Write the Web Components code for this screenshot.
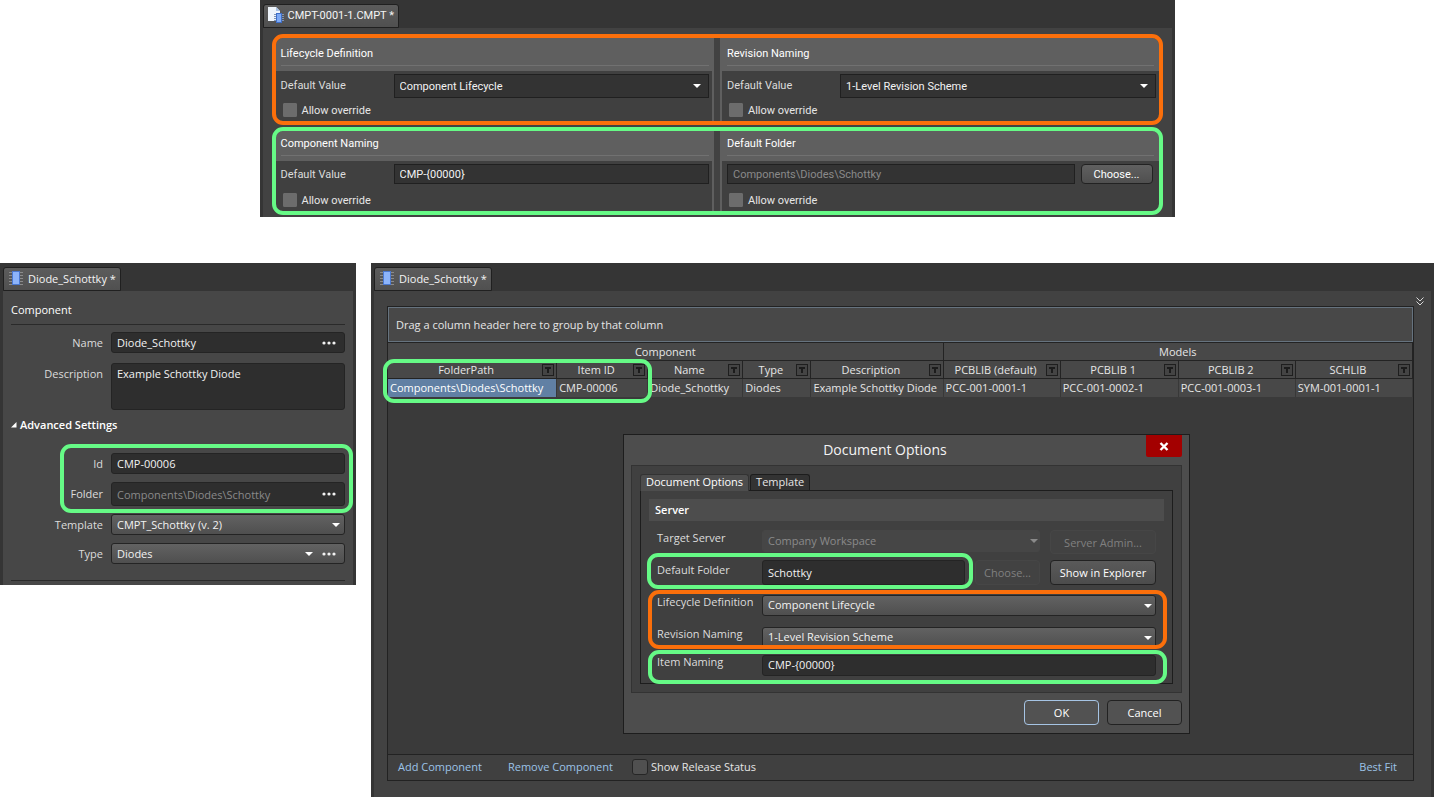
<!DOCTYPE html>
<html lang="en">
<head>
<meta charset="utf-8">
<title>Component templates</title>
<style>
    body {
        margin: 0;
        background: #fff;
        color: #e6e6e6;
        font: 11px/15px "Open Sans", "Noto Sans", sans-serif;
    }
</style>
</head>
<body>
<defaults-page></defaults-page>

<script>
const icons = {
    chip: `
        <svg width="16" height="16" viewBox="0 0 16 16">
            <path d="M1 2.5h14M1 5.5h14M1 8.5h14M1 11.5h14M1 14.5h14" stroke="#8b8b8b"/>
            <rect x="4" y="1" width="8" height="14" fill="#4a78d0"/>
            <rect x="5" y="2" width="6" height="12" fill="#8db4fa"/>
        </svg>`,
    document: `
        <svg width="16" height="16" viewBox="0 0 16 16">
            <path d="M0 0h8l4 4v10H0z" fill="#eef4fb"/>
            <path d="M8 0l4 4H8z" fill="#a9c2e4"/>
            <path d="M6 7.5h10M6 9.5h10M6 11.5h10M6 13.5h10" stroke="#7f93b5"/>
            <rect x="8" y="6" width="6" height="10" fill="#3f6fc8"/>
            <rect x="9" y="7" width="4" height="8" fill="#7eaaf5"/>
        </svg>`,
    arrow: `<svg class="arrow" width="8" height="4" viewBox="0 0 8 4"><path d="M0 0h8L4 4z" fill="currentColor"/></svg>`,
    dots: `<svg width="14" height="4" viewBox="0 0 14 4"><g fill="#f2f2f2"><circle cx="2" cy="2" r="1.600"/><circle cx="7" cy="2" r="1.600"/><circle cx="12" cy="2" r="1.600"/></g></svg>`,
    filter: `<svg width="12" height="12" viewBox="0 0 12 12"><rect x=".5" y=".5" width="11" height="11" fill="#444" stroke="#1e1e1e"/><path d="M3 3h6v2H7v4H5V5H3z" fill="#1c1c1c"/></svg>`,
    chevrons: `<svg width="8" height="9" viewBox="0 0 8 9"><path d="M.5 .5L4 4 7.500 .5M.5 4.500L4 8l3.500-3.500" fill="none" stroke="#d8d8d8"/></svg>`,
    close: `<svg width="10" height="9" viewBox="0 0 10 9"><path d="M1.500 1l7 7M8.500 1l-7 7" stroke="#fff" stroke-width="2.400"/></svg>`
}

/* Coloured outline drawn around whatever is slotted in */
const MarkRingTemplate = document.createElement("template")
MarkRingTemplate.innerHTML = `
    <style>
        :host {
            --ring-color: #66fa86;
            display: block;
            position: relative;
        }
        :host([tone="orange"]) {
            --ring-color: #fb6f0b;
        }
        :host::after {
            content: "";
            position: absolute;
            inset: var(--ring-inset, 0);
            border: 4px solid var(--ring-color);
            border-radius: 11px;
            pointer-events: none;
            z-index: 1;
        }
    </style>
    <slot></slot>
`

class MarkRing extends HTMLElement {
    constructor() {
        super()
        this.attachShadow({mode: "open"}).append(MarkRingTemplate.content.cloneNode(true))
    }
}

/* Editor window with one document tab */
class DocPanel extends HTMLElement {
    constructor() {
        super()
        this.attachShadow({mode: "open"})
    }

    connectedCallback() {
        this.shadowRoot.innerHTML = `
            <style>
                :host {
                    display: flex;
                    flex-direction: column;
                    box-sizing: border-box;
                    padding: 0 3px;
                    background: #353535;
                }
                .strip {
                    padding-top: 4px;
                    height: 24px;
                }
                button {
                    display: flex;
                    align-items: center;
                    gap: 4px;
                    box-sizing: border-box;
                    height: 24px;
                    padding: 0 4px 2px;
                    border: 1px solid #202020;
                    border-radius: 3px 3px 0 0;
                    background: linear-gradient(#5c5c5c, #505050);
                    color: #f4f4f4;
                    font: inherit;
                    white-space: nowrap;
                }
                .body {
                    flex: 1;
                    display: flex;
                    flex-direction: column;
                    background: var(--panel-body, #424242);
                }
            </style>
            <div class="strip">
                <button type="button" role="tab" aria-selected="true">${icons[this.getAttribute("icon")]}<span>${this.getAttribute("title-text")}</span></button>
            </div>
            <div class="body"><slot></slot></div>
        `
    }
}

/* Label with a text box, text area or drop-down */
class FormField extends HTMLElement {
    constructor() {
        super()
        this.attachShadow({mode: "open"})
    }

    connectedCallback() {
        const label = this.getAttribute("label")
        const kind = this.getAttribute("kind") || "text"
        this.shadowRoot.innerHTML = `
            <style>
                :host {
                    display: grid;
                    grid-template-columns: var(--label-width, 105px) minmax(0, 1fr);
                    align-items: start;
                }
                :host([bare]) {
                    display: block;
                }
                label {
                    line-height: var(--label-line, 21px);
                    text-align: var(--label-align, left);
                    padding-right: var(--label-gap, 0);
                    color: #dcdcdc;
                    white-space: nowrap;
                }
                .box {
                    display: grid;
                    align-items: center;
                    height: var(--control-height, 21px);
                }
                .box > * {
                    grid-area: 1 / 1;
                }
                input, textarea, select {
                    appearance: none;
                    box-sizing: border-box;
                    width: 100%;
                    height: 100%;
                    margin: 0;
                    padding: 0 5px var(--text-lift, 0);
                    border: 1px solid var(--control-border, #242424);
                    border-radius: var(--control-radius, 3px);
                    background: var(--input-fill, #2e2e2e);
                    color: #f2f2f2;
                    font: inherit;
                    resize: none;
                    opacity: 1;
                }
                textarea {
                    padding: 2px 5px;
                    overflow: hidden;
                }
                select {
                    background: var(--select-fill, linear-gradient(#626262, #4f4f4f));
                }
                :disabled {
                    color: #8a8a8a;
                }
                select:disabled {
                    background: #464646;
                    border-color: #464646;
                }
                .adorn {
                    justify-self: end;
                    display: flex;
                    align-items: center;
                    gap: 9px;
                    padding-right: var(--arrow-pad, 5px);
                    pointer-events: none;
                    color: #fff;
                }
                select:disabled + .adorn {
                    color: #8a8a8a;
                }
                .adorn.more {
                    padding-right: 9px;
                }
                .adorn button {
                    display: flex;
                    padding: 6px 0;
                    border: 0;
                    background: none;
                    pointer-events: auto;
                }
            </style>
            ${this.hasAttribute("bare") ? "" : `<label for="control">${label}</label>`}
            <div class="box">
                ${this.controlMarkup(kind, label)}
                ${this.adornMarkup(kind, label)}
            </div>
        `
    }

    controlMarkup(kind, label) {
        const value = this.getAttribute("value")
        const disabled = this.hasAttribute("disabled") ? "disabled" : ""
        switch(kind) {
            case "select":
                return `<select id="control" aria-label="${label}" ${disabled}><option>${value}</option></select>`
            case "area":
                return `<textarea id="control" aria-label="${label}" ${disabled}>${value}</textarea>`
            default:
                return `<input id="control" type="text" aria-label="${label}" value="${value}" ${disabled}>`
        }
    }

    adornMarkup(kind, label) {
        const more = this.hasAttribute("more")
        if(!more && kind !== "select") return ""
        return `
            <span class="adorn ${more ? "more" : ""}">
                ${kind === "select" ? icons.arrow : ""}
                ${more ? `<button type="button" aria-label="Browse ${label}">${icons.dots}</button>` : ""}
            </span>`
    }
}

const CheckFieldTemplate = document.createElement("template")
CheckFieldTemplate.innerHTML = `
    <style>
        :host {
            display: block;
        }
        label {
            display: flex;
            align-items: center;
            gap: var(--check-gap, 5px);
            height: var(--check-size, 14px);
            line-height: var(--check-line, 15px);
            white-space: nowrap;
        }
        input {
            appearance: none;
            box-sizing: border-box;
            flex: none;
            width: var(--check-size, 14px);
            height: var(--check-size, 14px);
            margin: 0;
            border: 1px solid var(--check-border, #6c6c6c);
            border-radius: var(--check-radius, 1px);
            background: var(--check-fill, #6c6c6c);
        }
        input:checked {
            background: #9cc3e8;
        }
    </style>
    <label><input type="checkbox"><slot></slot></label>
`

class CheckField extends HTMLElement {
    constructor() {
        super()
        this.attachShadow({mode: "open"}).append(CheckFieldTemplate.content.cloneNode(true))
    }
}

const PushButtonTemplate = document.createElement("template")
PushButtonTemplate.innerHTML = `
    <style>
        :host {
            display: block;
            height: 25px;
        }
        button {
            box-sizing: border-box;
            width: 100%;
            height: 100%;
            padding: 0;
            border: 1px solid #222;
            border-radius: 4px;
            background: var(--button-fill, #525252);
            color: #fff;
            font: inherit;
            white-space: nowrap;
        }
        :host([primary]) button {
            border-color: #a6c4e4;
        }
        button:disabled {
            border-color: #464646;
            background: #424242;
            color: #808080;
        }
    </style>
    <button type="button"><slot></slot></button>
`

class PushButton extends HTMLElement {
    constructor() {
        super()
        this.attachShadow({mode: "open"}).append(PushButtonTemplate.content.cloneNode(true))
    }

    connectedCallback() {
        this.shadowRoot.querySelector("button").disabled = this.hasAttribute("disabled")
    }
}

/* Titled block of the template editor */
class SettingSection extends HTMLElement {
    constructor() {
        super()
        this.attachShadow({mode: "open"})
    }

    connectedCallback() {
        this.shadowRoot.innerHTML = `
            <style>
                :host {
                    display: block;
                    background: #5f5f5f;
                }
                header {
                    padding: var(--section-top, 2px) 5px 5px;
                    color: #fff;
                }
                h2 {
                    margin: 0;
                    font: inherit;
                    line-height: 22px;
                    border-bottom: 1px solid #717171;
                }
                .body {
                    display: grid;
                    grid-template-rows: 24px 14px;
                    gap: 5px;
                    margin-right: 2px;
                    padding: 3px 3px 4px 5px;
                    background: #404040;
                }
                :host([side="right"]) header {
                    padding-left: 7px;
                }
                :host([side="right"]) .body {
                    margin: 0 0 0 2px;
                }
                ::slotted(check-field) {
                    padding-left: 2px;
                }
            </style>
            <header><h2>${this.getAttribute("heading")}</h2></header>
            <div class="body"><slot></slot></div>
        `
    }
}

const TemplateDefaultsTemplate = document.createElement("template")
TemplateDefaultsTemplate.innerHTML = `
    <style>
        :host {
            display: block;
            font-family: Roboto, "Open Sans", sans-serif;
            --label-width: 113px;
            --label-line: 24px;
            --control-height: 24px;
            --control-radius: 0;
            --input-fill: #333;
            --select-fill: #333;
            --control-border: #202020;
            --arrow-pad: 8px;
            --check-line: 17px;
            --button-fill: linear-gradient(#606060, #4f4f4f);
        }
        .stack {
            display: grid;
            gap: 2px;
            padding: 6px 9px 2px;
        }
        .pair {
            display: grid;
            grid-template-columns: 1fr 1fr;
            gap: 6px;
            margin: 4px;
            overflow: hidden;
            border-radius: 7px;
        }
        .first {
            --section-top: 5px;
        }
        .second {
            --label-line: 22px;
            --control-height: 20px;
        }
        .folder {
            display: grid;
            grid-template-columns: minmax(0, 1fr) 72px;
            gap: 6px;
            padding-right: 3px;
        }
        push-button {
            height: 20px;
        }
    </style>
    <doc-panel icon="document" title-text="CMPT-0001-1.CMPT *">
        <div class="stack">
            <mark-ring tone="orange">
                <div class="pair first">
                    <setting-section heading="Lifecycle Definition">
                        <form-field kind="select" label="Default Value" value="Component Lifecycle"></form-field>
                        <check-field>Allow override</check-field>
                    </setting-section>
                    <setting-section heading="Revision Naming" side="right">
                        <form-field kind="select" label="Default Value" value="1-Level Revision Scheme"></form-field>
                        <check-field>Allow override</check-field>
                    </setting-section>
                </div>
            </mark-ring>
            <mark-ring>
                <div class="pair second">
                    <setting-section heading="Component Naming">
                        <form-field label="Default Value" value="CMP-{00000}"></form-field>
                        <check-field>Allow override</check-field>
                    </setting-section>
                    <setting-section heading="Default Folder" side="right">
                        <div class="folder">
                            <form-field bare disabled label="Default Folder" value="Components\\Diodes\\Schottky"></form-field>
                            <push-button>Choose...</push-button>
                        </div>
                        <check-field>Allow override</check-field>
                    </setting-section>
                </div>
            </mark-ring>
        </div>
    </doc-panel>
`

class TemplateDefaults extends HTMLElement {
    constructor() {
        super()
        this.attachShadow({mode: "open"}).append(TemplateDefaultsTemplate.content.cloneNode(true))
    }
}

const ComponentPropertiesTemplate = document.createElement("template")
ComponentPropertiesTemplate.innerHTML = `
    <style>
        :host {
            display: block;
            --panel-body: #474747;
            --label-width: 100px;
            --label-align: right;
            --label-gap: 8px;
        }
        .content {
            padding: 4px 8px;
        }
        h2 {
            margin: 0;
            padding: 7px 0;
            font: inherit;
            color: #fff;
            border-bottom: 1px solid #2a2a2a;
        }
        .rows {
            display: grid;
            gap: 8px;
        }
        .basic {
            gap: 10px;
            padding: 7px 0;
        }
        .description {
            --control-height: 47px;
            --label-line: 22px;
        }
        .folder {
            --control-height: 24px;
            --label-line: 24px;
        }
        h3 {
            display: flex;
            align-items: center;
            gap: 3px;
            margin: 0 0 21px;
            font: inherit;
            font-weight: 600;
            color: #fff;
        }
        mark-ring {
            --ring-inset: -9px -8px -7px 49px;
        }
        hr {
            margin: 16px 0 0;
            border: 0;
            border-top: 1px solid #2a2a2a;
        }
    </style>
    <doc-panel icon="chip" title-text="Diode_Schottky *">
        <div class="content">
            <h2>Component</h2>
            <div class="rows basic">
                <form-field more label="Name" value="Diode_Schottky"></form-field>
                <form-field class="description" kind="area" label="Description" value="Example Schottky Diode"></form-field>
            </div>
            <h3><svg width="6" height="6" viewBox="0 0 6 6"><path d="M5.500 0v5.500H0z" fill="#fff"/></svg>Advanced Settings</h3>
            <div class="rows">
                <mark-ring>
                    <div class="rows">
                        <form-field label="Id" value="CMP-00006"></form-field>
                        <form-field class="folder" more disabled label="Folder" value="Components\\Diodes\\Schottky"></form-field>
                    </div>
                </mark-ring>
                <form-field kind="select" label="Template" value="CMPT_Schottky (v. 2)"></form-field>
                <form-field kind="select" more label="Type" value="Diodes"></form-field>
            </div>
            <hr>
        </div>
    </doc-panel>
`

class ComponentProperties extends HTMLElement {
    constructor() {
        super()
        this.attachShadow({mode: "open"}).append(ComponentPropertiesTemplate.content.cloneNode(true))
    }
}

const DocumentOptionsTemplate = document.createElement("template")
DocumentOptionsTemplate.innerHTML = `
    <style>
        :host {
            display: block;
            box-sizing: border-box;
            border: 1px solid #1d1d1d;
            background: #4d4d4d;
            --label-line: 13px;
            --arrow-pad: 4px;
            --text-lift: 2px;
        }
        .title {
            display: flex;
            align-items: start;
            height: 30px;
            padding-right: 7px;
        }
        h2 {
            flex: 1;
            margin: 0;
            font-size: 14px;
            font-weight: 400;
            line-height: 30px;
            text-align: center;
            color: #f4f4f4;
        }
        .close {
            display: flex;
            align-items: center;
            justify-content: center;
            width: 36px;
            height: 22px;
            padding: 0;
            border: 0;
            border-radius: 0 0 2px 2px;
            background: #a30000;
        }
        .frame {
            margin: 0 7px;
            padding: 8px;
            border: 1px solid #333;
            background: #404040;
        }
        .tabs {
            display: flex;
            gap: 1px;
            height: 16px;
        }
        .tabs button {
            box-sizing: border-box;
            height: 16px;
            padding: 0 5px 1px;
            border: 1px solid #1d1d1d;
            border-bottom: 0;
            border-radius: 3px 3px 0 0;
            background: #333;
            color: #e6e6e6;
            font: inherit;
            line-height: 14px;
        }
        .tabs button[aria-selected="true"] {
            height: 17px;
            padding-bottom: 2px;
            border-color: #333;
            background: #4d4d4d;
            color: #fff;
        }
        .page {
            padding: 8px 8px 7px;
            border: 1px solid #1d1d1d;
        }
        h3 {
            margin: 0 0 9px;
            padding: 0 6px;
            background: #4d4d4d;
            color: #fff;
            font: inherit;
            font-weight: 600;
            line-height: 22px;
        }
        .form {
            padding: 0 8px;
        }
        .line {
            display: grid;
            grid-template-columns: minmax(0, 1fr) 106px;
            gap: 10px;
        }
        .server {
            --arrow-pad: 2px;
            height: 30px;
        }
        .server push-button {
            height: 24px;
        }
        .server-field {
            --control-height: 22px;
            --label-line: 16px;
        }
        .target {
            grid-template-columns: minmax(0, 1fr) 65px 106px;
            margin-bottom: 10px;
        }
        .target .box {
            --control-height: 25px;
            --label-line: 20px;
            --text-lift: 0;
            --ring-inset: -7px -8px -4px -10px;
        }
        .pair {
            display: grid;
            gap: 11px;
            margin-bottom: 7px;
            --ring-inset: -5px -11px -1px -9px;
        }
        .item {
            --ring-inset: -5px -11px -8px -9px;
        }
        .push {
            --button-fill: linear-gradient(#5a5a5a, #4c4c4c);
        }
        .buttons {
            display: grid;
            grid-template-columns: 75px 75px;
            justify-content: end;
            gap: 8px;
            padding: 7px 7px 8px;
        }
    </style>
    <div class="title">
        <h2>Document Options</h2>
        <button class="close" type="button" aria-label="Close">${icons.close}</button>
    </div>
    <div class="frame">
        <div class="tabs" role="tablist">
            <button type="button" role="tab" aria-selected="true">Document Options</button>
            <button type="button" role="tab" aria-selected="false">Template</button>
        </div>
        <div class="page">
            <h3>Server</h3>
            <div class="form">
                <div class="line server">
                    <form-field class="server-field" kind="select" disabled label="Target Server" value="Company Workspace"></form-field>
                    <push-button disabled>Server Admin...</push-button>
                </div>
                <div class="line target">
                    <mark-ring class="box">
                        <form-field label="Default Folder" value="Schottky"></form-field>
                    </mark-ring>
                    <push-button disabled>Choose...</push-button>
                    <push-button class="push">Show in Explorer</push-button>
                </div>
                <mark-ring class="pair" tone="orange">
                    <form-field kind="select" label="Lifecycle Definition" value="Component Lifecycle"></form-field>
                    <form-field kind="select" label="Revision Naming" value="1-Level Revision Scheme"></form-field>
                </mark-ring>
                <mark-ring class="item">
                    <form-field label="Item Naming" value="CMP-{00000}"></form-field>
                </mark-ring>
            </div>
        </div>
    </div>
    <div class="buttons">
        <push-button primary>OK</push-button>
        <push-button>Cancel</push-button>
    </div>
`

class DocumentOptions extends HTMLElement {
    constructor() {
        super()
        this.attachShadow({mode: "open"}).append(DocumentOptionsTemplate.content.cloneNode(true))
    }
}

/* Banded grid with the components being edited */
class ComponentTable extends HTMLElement {
    constructor() {
        super()
        this.attachShadow({mode: "open"})
        this.columns = [
            ["FolderPath", "Components\\Diodes\\Schottky", 169],
            ["Item ID", "CMP-00006", 91],
            ["Name", "Diode_Schottky", 95],
            ["Type", "Diodes", 68],
            ["Description", "Example Schottky Diode", 132],
            ["PCBLIB (default)", "PCC-001-0001-1", 117],
            ["PCBLIB 1", "PCC-001-0002-1", 118],
            ["PCBLIB 2", "PCC-001-0003-1", 117],
            ["SCHLIB", "SYM-001-0001-1", 117]
        ]
    }

    connectedCallback() {
        this.shadowRoot.innerHTML = `
            <style>
                :host {
                    display: block;
                }
                table {
                    width: 100%;
                    table-layout: fixed;
                    border-collapse: separate;
                    border-spacing: 0;
                    background: #484848;
                }
                th, td {
                    box-sizing: border-box;
                    height: 18px;
                    padding: 0 2px;
                    border-right: 1px solid #383838;
                    font-weight: 400;
                    line-height: 17px;
                    text-align: left;
                    white-space: nowrap;
                }
                th {
                    border-color: #232323;
                    border-bottom: 1px solid #232323;
                    text-align: center;
                }
                td {
                    padding-bottom: 1px;
                }
                .head {
                    display: flex;
                    align-items: center;
                }
                .head span {
                    flex: 1;
                }
                .head button {
                    display: flex;
                    padding: 0;
                    border: 0;
                    background: none;
                }
                td:first-child {
                    background: #6180a4;
                    color: #fff;
                }
            </style>
            <table>
                <colgroup>${this.columns.map(([, , width]) => `<col style="width: ${width}px">`).join("")}</colgroup>
                <thead>
                    <tr><th colspan="5">Component</th><th colspan="4">Models</th></tr>
                    <tr>${this.columns.map(([name]) => `
                        <th><div class="head"><span>${name}</span><button type="button" aria-label="Filter ${name}">${icons.filter}</button></div></th>`).join("")}
                    </tr>
                </thead>
                <tbody>
                    <tr>${this.columns.map(([, value]) => `<td>${value}</td>`).join("")}</tr>
                </tbody>
            </table>
        `
    }
}

const BatchEditorTemplate = document.createElement("template")
BatchEditorTemplate.innerHTML = `
    <style>
        :host {
            display: grid;
            position: relative;
        }
        .bar {
            display: flex;
            justify-content: end;
            box-sizing: border-box;
            padding: 6px 7px 0;
            height: 15px;
        }
        .bar button {
            display: flex;
            height: 9px;
            padding: 0;
            border: 0;
            background: none;
        }
        .grid {
            flex: 1;
            display: flex;
            flex-direction: column;
            margin: 0 17px 16px 13px;
            border: 1px solid #222;
            background: #3a3a3a;
        }
        .group {
            padding: 0 7px;
            border: 1px solid #66737f;
            background: #484848;
            line-height: 33px;
        }
        .data {
            flex: 1;
            border-top: 1px solid #232323;
        }
        .ring {
            position: absolute;
            left: 12px;
            top: 96px;
            width: 269px;
            height: 44px;
        }
        .ring mark-ring {
            height: 100%;
        }
        .footer {
            display: flex;
            align-items: center;
            height: 23px;
            padding: 0 16px 2px 10px;
            border-top: 1px solid #222;
            background: #404040;
            --check-size: 16px;
            --check-gap: 3px;
            --check-border: #262626;
            --check-fill: #505050;
            --check-radius: 3px;
        }
        .footer a {
            margin-right: 26px;
            color: #9cc3e8;
            text-decoration: none;
        }
        .footer check-field {
            margin: 0 auto 0 -7px;
        }
        .footer a:last-child {
            margin-right: 0;
        }
        document-options {
            position: absolute;
            left: 252px;
            top: 171px;
            width: 567px;
        }
    </style>
    <doc-panel icon="chip" title-text="Diode_Schottky *">
        <div class="bar"><button type="button" aria-label="Show more">${icons.chevrons}</button></div>
        <div class="grid">
            <div class="group">Drag a column header here to group by that column</div>
            <div class="data"><component-table></component-table></div>
            <div class="footer">
                <a href="#add">Add Component</a>
                <a href="#remove">Remove Component</a>
                <check-field>Show Release Status</check-field>
                <a href="#fit">Best Fit</a>
            </div>
        </div>
    </doc-panel>
    <div class="ring"><mark-ring></mark-ring></div>
    <document-options role="dialog" aria-label="Document Options"></document-options>
`

class BatchEditor extends HTMLElement {
    constructor() {
        super()
        this.attachShadow({mode: "open"}).append(BatchEditorTemplate.content.cloneNode(true))
    }
}

const DefaultsPageTemplate = document.createElement("template")
DefaultsPageTemplate.innerHTML = `
    <style>
        :host {
            display: flex;
            flex-direction: column;
            gap: 46px;
            min-height: 100vh;
        }
        template-defaults {
            align-self: center;
            width: min(915px, 100%);
        }
        .editors {
            flex: 1;
            display: grid;
            grid-template-columns: 356px minmax(0, 1fr);
            gap: 15px;
        }
        component-properties {
            align-self: start;
        }
    </style>
    <template-defaults></template-defaults>
    <div class="editors">
        <component-properties></component-properties>
        <batch-editor></batch-editor>
    </div>
`

class DefaultsPage extends HTMLElement {
    constructor() {
        super()
        this.attachShadow({mode: "open"}).append(DefaultsPageTemplate.content.cloneNode(true))
    }
}

customElements.define("mark-ring", MarkRing)
customElements.define("doc-panel", DocPanel)
customElements.define("form-field", FormField)
customElements.define("check-field", CheckField)
customElements.define("push-button", PushButton)
customElements.define("setting-section", SettingSection)
customElements.define("template-defaults", TemplateDefaults)
customElements.define("component-properties", ComponentProperties)
customElements.define("document-options", DocumentOptions)
customElements.define("component-table", ComponentTable)
customElements.define("batch-editor", BatchEditor)
customElements.define("defaults-page", DefaultsPage)
</script>
</body>
</html>
